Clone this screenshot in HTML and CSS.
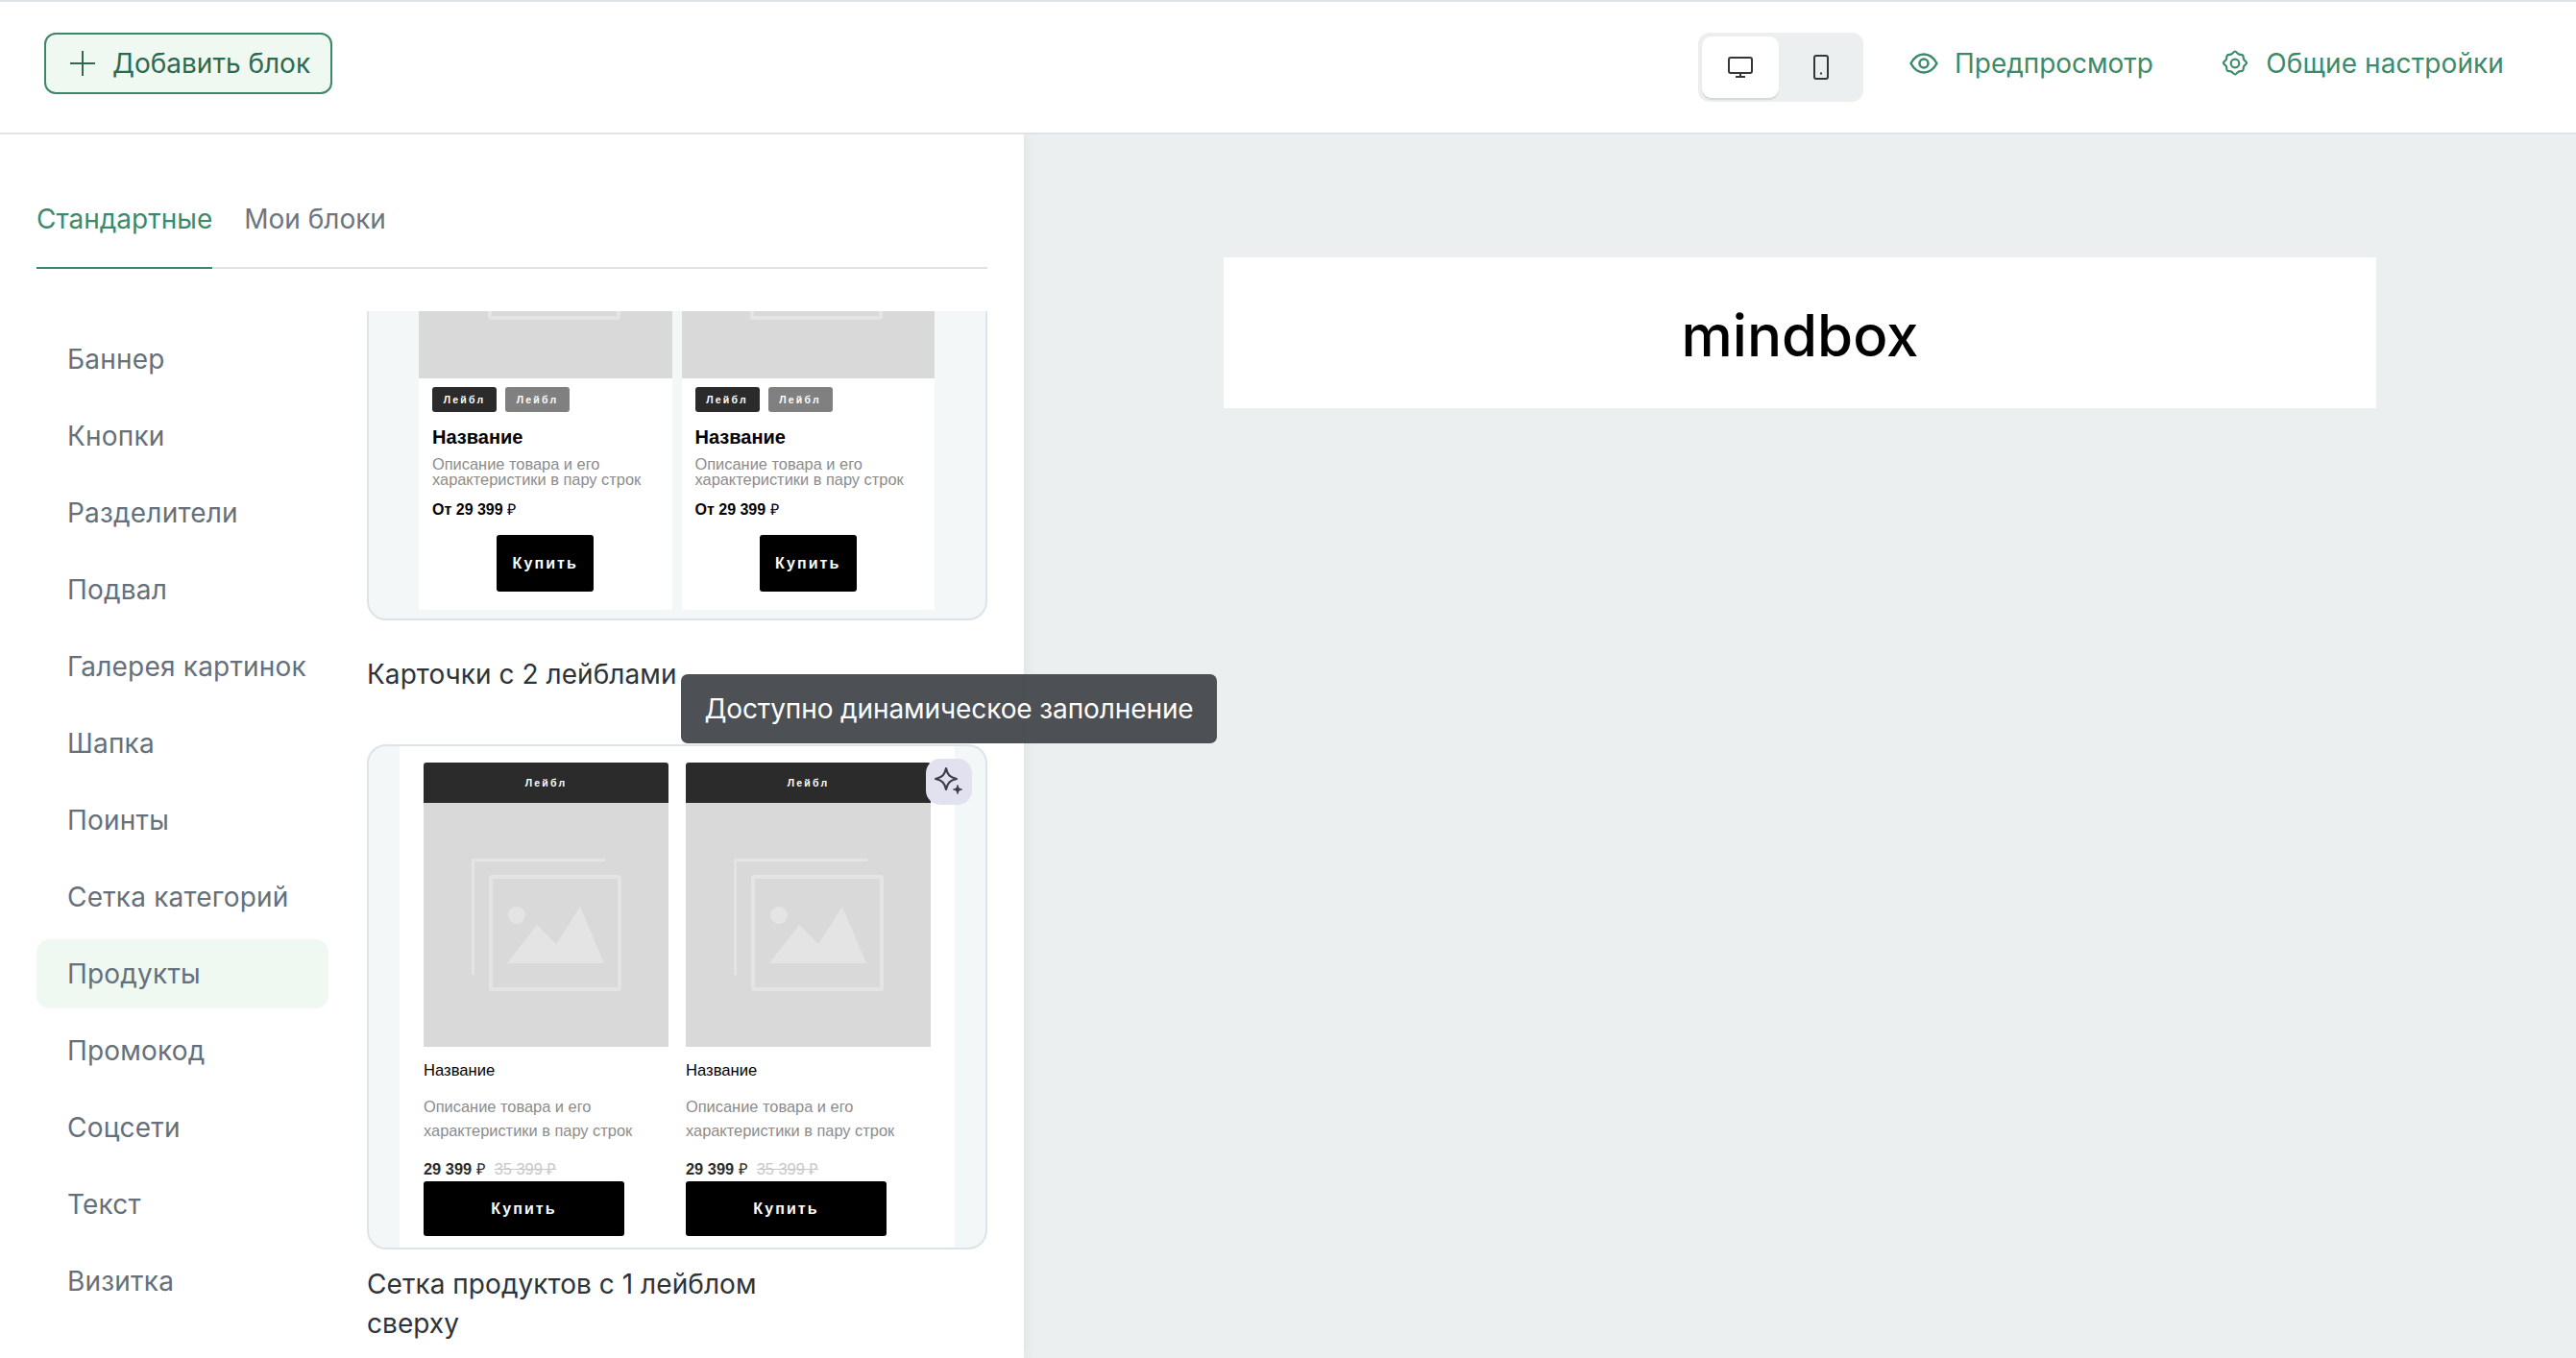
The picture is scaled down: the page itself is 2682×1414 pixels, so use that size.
FILE: index.html
```html
<!DOCTYPE html>
<html lang="ru">
<head>
<meta charset="utf-8">
<title>Редактор</title>
<link rel="stylesheet" href="styles.css">
</head>
<body>
<svg class="defs" width="0" height="0" aria-hidden="true">
  <symbol id="ph" viewBox="0 0 156 138">
    <path d="M1.5 120V1.5H138" fill="none" stroke="#e4e4e4" stroke-width="3" stroke-linecap="round"/>
    <rect x="20" y="19" width="134" height="117" fill="none" stroke="#e4e4e4" stroke-width="4" rx="1"/>
    <circle cx="47" cy="59" r="9" fill="#e4e4e4"/>
    <path d="M37 109 68 69 88 89 113 50 138 109Z" fill="#e4e4e4"/>
  </symbol>
</svg>
<div class="app">
  <header class="topbar">
    <button class="add-btn">
      <svg class="add-ico" viewBox="0 0 26 26"><path d="M13 0v26M0 13h26" stroke="currentColor" stroke-width="2" fill="none"/></svg>
      Добавить блок
    </button>
    <div class="topbar-right">
      <div class="seg">
        <div class="seg-item seg-active">
          <svg class="ico-monitor" viewBox="0 0 26 22"><rect x="1" y="1" width="24" height="16" rx="2" fill="none" stroke="#33373b" stroke-width="2"/><path d="M13 17v3M8 21h10" stroke="#33373b" stroke-width="2" fill="none"/></svg>
        </div>
        <div class="seg-item seg-second">
          <svg class="ico-phone" viewBox="0 0 16 26"><rect x="1" y="1" width="14" height="24" rx="2" fill="none" stroke="#33373b" stroke-width="2"/><rect x="7" y="18.5" width="2" height="2" fill="#33373b"/></svg>
        </div>
      </div>
      <a class="top-link link-preview">
        <svg class="ico-eye" viewBox="0 0 30 22"><path d="M1.5 11C5 4.5 9.5 1.5 15 1.5S25 4.5 28.500 11C25 17.500 20.500 20.500 15 20.500S5 17.500 1.500 11Z" fill="none" stroke="currentColor" stroke-width="2.500" stroke-linejoin="round"/><circle cx="15" cy="11" r="4.500" fill="none" stroke="currentColor" stroke-width="2.500"/></svg>
        Предпросмотр
      </a>
      <a class="top-link link-settings">
        <svg class="ico-gear" viewBox="0 0 26 28"><path d="M13 1.500c1.500 0 2 2 3.500 2.800 1.500.8 3.500.2 4.500 1.200 1 1.200.5 3 1.200 4.500.6 1.300 2.800 2 2.800 3.500s-2.200 2.200-2.800 3.500c-.7 1.500-.2 3.300-1.200 4.500-1 1-3 .4-4.500 1.200-1.500.8-2 2.800-3.500 2.800s-2-2-3.500-2.800C8 21.900 6 22.500 5 21.500c-1-1.200-.5-3-1.200-4.500C3.200 15.700 1 15 1 13.500s2.200-2.200 2.800-3.500C4.500 8.500 4 6.700 5 5.500c1-1 3-.4 4.500-1.200 1.500-.8 2-2.800 3.500-2.800Z" fill="none" stroke="currentColor" stroke-width="2.200" stroke-linejoin="round"/><circle cx="13" cy="14" r="4.300" fill="none" stroke="currentColor" stroke-width="2.200"/></svg>
        Общие настройки
      </a>
    </div>
  </header>

  <main class="main">
    <aside class="panel">
      <nav class="tabs">
        <span class="tab tab-active">Стандартные</span>
        <span class="tab">Мои блоки</span>
      </nav>
      <div class="panel-body">
        <ul class="cats">
          <li class="cat">Баннер</li>
          <li class="cat">Кнопки</li>
          <li class="cat">Разделители</li>
          <li class="cat">Подвал</li>
          <li class="cat">Галерея картинок</li>
          <li class="cat">Шапка</li>
          <li class="cat">Поинты</li>
          <li class="cat">Сетка категорий</li>
          <li class="cat cat-active">Продукты</li>
          <li class="cat">Промокод</li>
          <li class="cat">Соцсети</li>
          <li class="cat">Текст</li>
          <li class="cat">Визитка</li>
        </ul>
        <div class="blocks">
          <div class="blocks-inner">
            <section class="block">
              <div class="thumb thumb-a">
                <div class="pa-col">
                  <div class="pa-img"><svg class="ph"><use href="#ph"/></svg></div>
                  <div class="pa-labels"><span class="lab lab-dark">Лейбл</span><span class="lab lab-grey">Лейбл</span></div>
                  <div class="pa-name">Название</div>
                  <div class="pa-desc">Описание товара и его<br>характеристики в пару строк</div>
                  <div class="pa-price">От 29 399 <span class="rub">₽</span></div>
                  <div class="pa-buy">Купить</div>
                </div>
                <div class="pa-col">
                  <div class="pa-img"><svg class="ph"><use href="#ph"/></svg></div>
                  <div class="pa-labels"><span class="lab lab-dark">Лейбл</span><span class="lab lab-grey">Лейбл</span></div>
                  <div class="pa-name">Название</div>
                  <div class="pa-desc">Описание товара и его<br>характеристики в пару строк</div>
                  <div class="pa-price">От 29 399 <span class="rub">₽</span></div>
                  <div class="pa-buy">Купить</div>
                </div>
              </div>
              <div class="block-title">Карточки с 2 лейблами</div>
            </section>
            <section class="block">
              <div class="thumb thumb-b">
                <div class="pb-sheet">
                  <div class="pb-col">
                    <div class="pb-head">Лейбл</div>
                    <div class="pb-img"><svg class="ph"><use href="#ph"/></svg></div>
                    <div class="pb-name">Название</div>
                    <div class="pb-desc">Описание товара и его<br>характеристики в пару строк</div>
                    <div class="pb-price"><b>29 399 <span class="rub">₽</span></b><s>35 399 <span class="rub">₽</span></s></div>
                    <div class="pb-buy">Купить</div>
                  </div>
                  <div class="pb-col">
                    <div class="pb-head">Лейбл</div>
                    <div class="pb-img"><svg class="ph"><use href="#ph"/></svg></div>
                    <div class="pb-name">Название</div>
                    <div class="pb-desc">Описание товара и его<br>характеристики в пару строк</div>
                    <div class="pb-price"><b>29 399 <span class="rub">₽</span></b><s>35 399 <span class="rub">₽</span></s></div>
                    <div class="pb-buy">Купить</div>
                  </div>
                </div>
                <div class="ai-badge">
                  <svg class="ai-ico" viewBox="0 0 48 48"><path d="M21 10c1.500 7 4 9.500 11 11-7 1.500-9.500 4-11 11-1.500-7-4-9.500-11-11 7-1.500 9.500-4 11-11Z" fill="none" stroke="#3c3f47" stroke-width="2.200" stroke-linejoin="round"/><path d="M33 27.500c.7 3 1.500 3.800 4.500 4.500-3 .7-3.800 1.500-4.500 4.500-.7-3-1.500-3.800-4.500-4.500 3-.7 3.800-1.500 4.500-4.500Z" fill="#3c3f47" stroke="#3c3f47" stroke-width="1"/></svg>
                </div>
              </div>
              <div class="block-title">Сетка продуктов с 1 лейблом сверху</div>
            </section>
          </div>
        </div>
      </div>
    </aside>
    <section class="canvas">
      <div class="email-logo"><span class="logo-text">mindbox</span></div>
    </section>
  </main>
  <div class="tooltip">Доступно динамическое заполнение</div>
</div>
</body>
</html>
```
FILE: styles.css
```css
* { box-sizing: border-box; }
html, body { margin: 0; padding: 0; }
body { font-family: Inter, "Noto Sans", sans-serif; background: #fff; color: #2e3338; overflow: hidden; }
.defs { position: absolute; }
.app { position: relative; width: 2682px; height: 1414px; overflow: hidden; display: flex; flex-direction: column; }

.topbar { height: 140px; flex: none; border-top: 2px solid #dde3e8; border-bottom: 2px solid #dde3e8; padding: 32px 75px 0 46px; display: flex; justify-content: space-between; align-items: flex-start; background: #fff; position: relative; z-index: 2; }
.add-btn { width: 300px; height: 64px; border: 2px solid #3b8768; border-radius: 12px; background: #f0f8f2; color: #2c6b50; font: 400 28px/1 Inter, sans-serif; display: flex; align-items: center; gap: 18px; padding: 0 0 0 25px; }
.add-ico { width: 26px; height: 26px; flex: none; }
.topbar-right { display: flex; align-items: flex-start; }
.seg { width: 172px; height: 72px; background: #ebeff0; border-radius: 12px; padding: 4px; display: flex; margin-right: 48px; }
.seg-item { width: 80px; height: 64px; display: flex; align-items: center; justify-content: center; border-radius: 10px; }
.seg-second { width: 84px; padding-left: 4px; }
.seg-active { background: #fff; box-shadow: 0 2px 1px rgba(40,50,60,.12); }
.ico-monitor { width: 26px; height: 22px; }
.ico-phone { width: 16px; height: 26px; }
.top-link { height: 64px; display: flex; align-items: center; color: #3d8a6a; font-size: 28px; gap: 17px; }
.link-preview { margin-right: 72px; letter-spacing: -.05px; }
.link-settings { letter-spacing: .1px; }
.ico-eye { width: 30px; height: 22px; flex: none; }
.ico-gear { width: 26px; height: 28px; flex: none; margin-right: 2.600px; }

.main { flex: 1; display: flex; min-height: 0; }
.panel { width: 1066px; flex: none; padding: 0 38px; background: #fff; box-shadow: 0 0 14px rgba(40,50,60,.08); position: relative; z-index: 1; }
.tabs { height: 140px; width: 990px; border-bottom: 2px solid #dde3e8; display: flex; align-items: flex-end; gap: 33px; }
.tab { height: 96px; margin-bottom: -2px; padding-top: 24px; line-height: 40px; font-size: 28px; color: #6b7680; border-bottom: 2px solid transparent; }
.tab-active { color: #3d8a6a; border-bottom-color: #3b8768; }

.panel-body { display: flex; gap: 40px; align-items: flex-start; }
.cats { list-style: none; margin: 58px 0 0; padding: 0; width: 304px; flex: none; display: flex; flex-direction: column; gap: 8px; }
.cat { height: 72px; border-radius: 14px; padding-left: 32px; display: flex; align-items: center; font-size: 28px; letter-spacing: .2px; color: #65707a; white-space: nowrap; }
.cat-active { background: #f0f8f2; }

.blocks { width: 646px; flex: none; height: 1090px; margin-top: 44px; overflow: hidden; }
.blocks-inner { margin-top: -200px; }
.thumb { border: 2px solid #dde3e8; border-radius: 20px; background: #f4f7f8; position: relative; }
.block-title { min-height: 80px; margin: 16px 0 33px; max-width: 480px; display: flex; align-items: center; font-size: 28px; line-height: 41px; letter-spacing: .05px; color: #2e3338; }

.thumb-a { padding: 8px 0 9px 52px; display: grid; grid-template-columns: 263.500px 263.500px; column-gap: 10px; font-family: "Liberation Sans", Arial, sans-serif; }
.pa-col { background: #fff; height: 501px; }
.pa-img { height: 260px; background: #d9d9d9; display: flex; align-items: center; justify-content: center; }
.ph { width: 156px; height: 138px; display: block; }
.pa-labels { display: flex; gap: 9px; padding: 9px 0 0 14px; }
.lab { height: 26px; width: 67px; border-radius: 3px; color: #fff; font-size: 10.500px; font-weight: 700; letter-spacing: 2.200px; display: flex; align-items: center; justify-content: center; }
.lab-dark { background: #2b2b2b; }
.lab-grey { background: #808080; }
.pa-name { margin: 15px 0 0 14px; font-size: 20px; line-height: 22px; font-weight: 700; color: #000; }
.pa-desc { margin: 9px 0 0 14px; font-size: 16.400px; line-height: 16px; color: #8c8c8c; white-space: nowrap; }
.pa-price { margin: 14px 0 0 14px; height: 20px; font-size: 16px; line-height: 20px; font-weight: 700; color: #000; }
.rub { font-weight: 400; }
.pa-buy { width: 101px; height: 59px; margin: 16px auto 0; background: #000; border-radius: 3px; color: #fff; font-size: 16px; font-weight: 700; letter-spacing: 2.100px; display: flex; align-items: center; justify-content: center; }

.thumb-b { padding: 0 32px; font-family: "Liberation Sans", Arial, sans-serif; }
.pb-sheet { background: #fff; padding: 17px 25px 12px; display: flex; gap: 18px; }
.pb-col { width: 255px; height: 493px; flex: none; }
.pb-head { height: 42px; background: #2b2b2b; border-radius: 3px 3px 0 0; color: #fff; font-size: 10.500px; font-weight: 700; letter-spacing: 2.200px; display: flex; align-items: center; justify-content: center; }
.pb-img { height: 254px; background: #d9d9d9; display: flex; align-items: center; justify-content: center; }
.pb-name { margin-top: 15px; height: 20px; font-size: 16.600px; line-height: 20px; color: #000; }
.pb-desc { margin-top: 14.500px; height: 50px; font-size: 16.400px; line-height: 25px; color: #8c8c8c; white-space: nowrap; }
.pb-price { margin-top: 17.500px; height: 20px; font-size: 16.400px; line-height: 20px; white-space: nowrap; color: #2b2b2b; }
.pb-price s { margin-left: 9px; color: #c8c8c8; }
.pb-buy { width: 209px; height: 57px; margin-top: 3px; background: #000; border-radius: 3px; color: #fff; font-size: 16px; font-weight: 700; letter-spacing: 2.100px; display: flex; align-items: center; justify-content: center; }
.ai-badge { position: absolute; top: 13px; right: 14px; width: 48px; height: 48px; border-radius: 15px; background: #e1e1f0; }
.ai-ico { width: 48px; height: 48px; display: block; }

.canvas { flex: 1; background: #ebeff0; padding-top: 128px; display: flex; justify-content: center; align-items: flex-start; }
.email-logo { width: 1200px; height: 157px; padding-top: 4px; background: #fff; display: flex; align-items: center; justify-content: center; }
.logo-text { font-size: 60px; font-weight: 500; letter-spacing: 0; color: #000; line-height: 70px; }

.tooltip { position: absolute; left: 709px; top: 702px; width: 558px; height: 72px; border-radius: 7px; background: rgba(70,74,78,.96); color: #fff; font-size: 28px; letter-spacing: -.1px; display: flex; align-items: center; justify-content: center; z-index: 5; }
```
